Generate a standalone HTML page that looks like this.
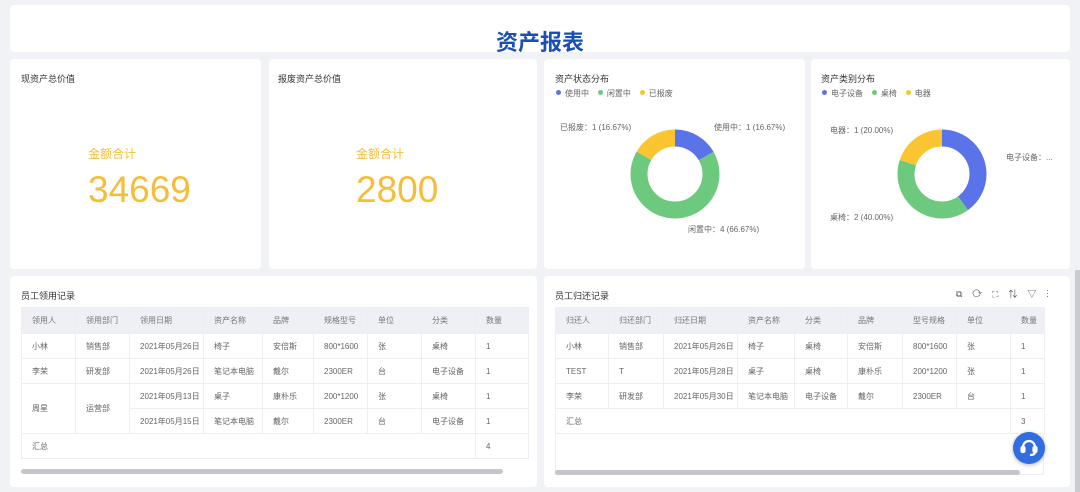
<!DOCTYPE html>
<html><head><meta charset="utf-8"><style>
*{box-sizing:border-box;margin:0;padding:0}
body{width:1080px;height:492px;background:#f1f2f6;font-family:"Liberation Sans","Noto Sans CJK SC",sans-serif;position:relative;overflow:hidden;color:#333}
.card{position:absolute;background:#fff;border-radius:4px}
.t{position:absolute;font-size:9px;color:#333}
.num{position:absolute;color:#f5bd3a;font-size:37px}
.lab{position:absolute;color:#f5bd3a;font-size:12px}
table{position:absolute;border-collapse:collapse;font-size:8px;color:#666;table-layout:fixed}
td{height:25px;padding-left:10px;border:1px solid #eceef3;white-space:nowrap;overflow:hidden}
tr.h td{background:#eef0f6;height:26px;color:#777}
.lg{position:absolute;font-size:8px;color:#666}
.dot{display:inline-block;width:5px;height:5px;border-radius:50%;margin-right:4px;vertical-align:1px}
.sb{position:absolute;height:5px;background:#c4c6cc;border-radius:3px}
.pl{position:absolute;font-size:8px;color:#666}
</style></head><body>
<div class="card" style="left:10px;top:5px;width:1060px;height:47px"></div>
<div style="position:absolute;left:0;width:1080px;top:25px;text-align:center;font-size:22px;font-weight:bold;color:#1a4fb5">资产报表</div>

<div class="card" style="left:10px;top:59px;width:251px;height:210px"></div>
<div class="t" style="left:21px;top:72px">现资产总价值</div>
<div class="lab" style="left:88px;top:145px">金额合计</div>
<div class="num" style="left:88px;top:169px">34669</div>

<div class="card" style="left:269px;top:59px;width:268px;height:210px"></div>
<div class="t" style="left:278px;top:72px">报废资产总价值</div>
<div class="lab" style="left:356px;top:145px">金额合计</div>
<div class="num" style="left:356px;top:169px">2800</div>

<div class="card" style="left:544px;top:59px;width:261px;height:210px"></div>
<div class="t" style="left:555px;top:72px">资产状态分布</div>
<div class="lg" style="left:556px;top:88px"><span class="dot" style="background:#5b73e8"></span>使用中 &nbsp; &nbsp;<span class="dot" style="background:#6cc97d"></span>闲置中 &nbsp; &nbsp;<span class="dot" style="background:#fbc532"></span>已报废</div>
<svg style="position:absolute;left:620px;top:119px" width="110" height="110">
<g transform="rotate(-90 55 55)" fill="none" stroke-width="17">
<circle cx="55" cy="55" r="36" stroke="#5b73e8" stroke-dasharray="37.7 300"/>
<circle cx="55" cy="55" r="36" stroke="#6cc97d" stroke-dasharray="0 37.7 150.8 300"/>
<circle cx="55" cy="55" r="36" stroke="#fbc532" stroke-dasharray="0 188.5 37.7 300"/>
</g></svg>
<div class="pl" style="left:560px;top:122px">已报废：1 (16.67%)</div>
<div class="pl" style="left:714px;top:122px">使用中：1 (16.67%)</div>
<div class="pl" style="left:688px;top:224px">闲置中：4 (66.67%)</div>

<div class="card" style="left:811px;top:59px;width:259px;height:210px"></div>
<div class="t" style="left:821px;top:72px">资产类别分布</div>
<div class="lg" style="left:822px;top:88px"><span class="dot" style="background:#5b73e8"></span>电子设备 &nbsp; &nbsp;<span class="dot" style="background:#6cc97d"></span>桌椅 &nbsp; &nbsp;<span class="dot" style="background:#fbc532"></span>电器</div>
<svg style="position:absolute;left:887px;top:119px" width="110" height="110">
<g transform="rotate(-90 55 55)" fill="none" stroke-width="17">
<circle cx="55" cy="55" r="36" stroke="#5b73e8" stroke-dasharray="90.5 300"/>
<circle cx="55" cy="55" r="36" stroke="#6cc97d" stroke-dasharray="0 90.5 90.5 300"/>
<circle cx="55" cy="55" r="36" stroke="#fbc532" stroke-dasharray="0 181 45.2 300"/>
</g></svg>
<div class="pl" style="left:830px;top:125px">电器：1 (20.00%)</div>
<div class="pl" style="left:1006px;top:152px">电子设备：...</div>
<div class="pl" style="left:830px;top:212px">桌椅：2 (40.00%)</div>

<div class="card" style="left:10px;top:276px;width:527px;height:211px"></div>
<div class="t" style="left:21px;top:289px">员工领用记录</div>
<table style="left:21px;top:307px;width:507px">
<colgroup><col style="width:54px"><col style="width:54px"><col style="width:74px"><col style="width:59px"><col style="width:51px"><col style="width:54px"><col style="width:54px"><col style="width:54px"><col style="width:53px"></colgroup>
<tr class="h"><td>领用人</td><td>领用部门</td><td>领用日期</td><td>资产名称</td><td>品牌</td><td>规格型号</td><td>单位</td><td>分类</td><td>数量</td></tr>
<tr><td>小林</td><td>销售部</td><td>2021年05月26日</td><td>椅子</td><td>安倍斯</td><td>800*1600</td><td>张</td><td>桌椅</td><td>1</td></tr>
<tr><td>李荣</td><td>研发部</td><td>2021年05月26日</td><td>笔记本电脑</td><td>戴尔</td><td>2300ER</td><td>台</td><td>电子设备</td><td>1</td></tr>
<tr><td rowspan="2">周星</td><td rowspan="2">运营部</td><td>2021年05月13日</td><td>桌子</td><td>康朴乐</td><td>200*1200</td><td>张</td><td>桌椅</td><td>1</td></tr>
<tr><td>2021年05月15日</td><td>笔记本电脑</td><td>戴尔</td><td>2300ER</td><td>台</td><td>电子设备</td><td>1</td></tr>
<tr><td colspan="8">汇总</td><td>4</td></tr>
</table>
<div class="sb" style="left:21px;top:469px;width:482px"></div>

<div class="card" style="left:544px;top:276px;width:526px;height:211px"></div>
<div class="t" style="left:555px;top:289px">员工归还记录</div>
<div style="position:absolute;left:956px;top:287px;font-size:9px;color:#555;letter-spacing:10px">⧉⟳⛶⇅▽⋮</div>
<table style="left:555px;top:307px;width:489px">
<colgroup><col style="width:53px"><col style="width:55px"><col style="width:74px"><col style="width:57px"><col style="width:53px"><col style="width:55px"><col style="width:54px"><col style="width:54px"><col style="width:34px"></colgroup>
<tr class="h"><td>归还人</td><td>归还部门</td><td>归还日期</td><td>资产名称</td><td>分类</td><td>品牌</td><td>型号规格</td><td>单位</td><td>数量</td></tr>
<tr><td>小林</td><td>销售部</td><td>2021年05月26日</td><td>椅子</td><td>桌椅</td><td>安倍斯</td><td>800*1600</td><td>张</td><td>1</td></tr>
<tr><td>TEST</td><td>T</td><td>2021年05月28日</td><td>桌子</td><td>桌椅</td><td>康朴乐</td><td>200*1200</td><td>张</td><td>1</td></tr>
<tr><td>李荣</td><td>研发部</td><td>2021年05月30日</td><td>笔记本电脑</td><td>电子设备</td><td>戴尔</td><td>2300ER</td><td>台</td><td>1</td></tr>
<tr><td colspan="8">汇总</td><td>3</td></tr>
</table>
<div style="position:absolute;left:555px;top:433px;width:489px;height:42px;border:1px solid #eceef3;border-top:none"></div>
<div class="sb" style="left:555px;top:470px;width:465px"></div>
<div style="position:absolute;left:1013px;top:432px;width:32px;height:32px;border-radius:50%;background:#2f6de0;box-shadow:0 1px 4px rgba(0,0,0,.3)">
<svg width="32" height="32" viewBox="0 0 32 32" fill="none" stroke="#fff" stroke-width="2.2"><path d="M10 18v-3a6 6 0 0 1 12 0v3"/><rect x="8.5" y="15" width="3" height="5" rx="1" fill="#fff"/><rect x="20.5" y="15" width="3" height="5" rx="1" fill="#fff"/><path d="M22 20c0 2-2 3-5 3"/></svg></div>
<div style="position:absolute;left:1075px;top:270px;width:5px;height:222px;background:#c9cbd0"></div>
</body></html>
